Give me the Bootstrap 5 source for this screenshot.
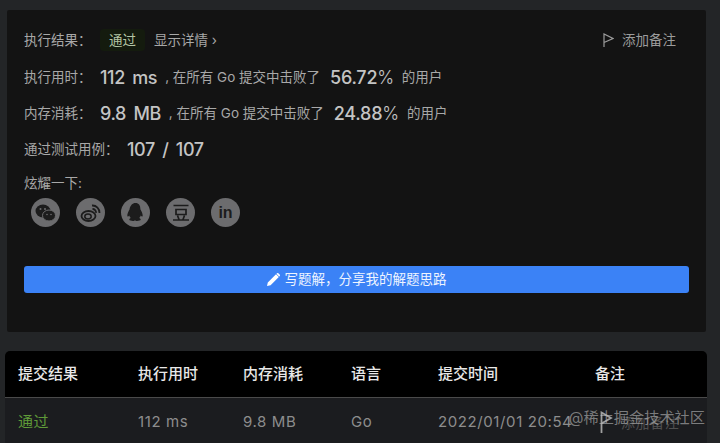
<!DOCTYPE html>
<html lang="zh">
<head>
    <meta charset="UTF-8">
    <title>提交结果</title>
    <link href="https://cdn.jsdelivr.net/npm/bootstrap@5.3.0/dist/css/bootstrap.min.css" rel="stylesheet">
    <style>
        html, body { height: 443px; overflow: hidden; }
        body {
            background: #232527;
            font-family: "Inter", "Noto Sans CJK SC", sans-serif;
            color: #a8a8a8;
            font-size: 13.5px;
        }
        .page-wrap { padding: 10px 14px 0 5px; position: relative; }
        .result-panel {
            background: #131313;
            margin-left: 2px;
            height: 322px;
            padding: 20px 17px 0;
            border-radius: 2px;
        }
        .info-row { display: flex; align-items: center; height: 22px; margin-top: 14px; }
        .info-top { height: 20px; margin-top: 0; margin-bottom: 16px; }
        .info-label { width: 76px; flex-shrink: 0; }
        .info-label-wide { width: 103px; flex-shrink: 0; }
        .big-val { font-size: 18px; font-weight: 500; color: #c4c4c4; white-space: pre; letter-spacing: -.4px; word-spacing: 3px; }
        .pct-val { margin-left: 10px; letter-spacing: -.25px; }
        .user-tail { margin-left: 8px; }
        .pct-sign { font-weight: 300; }
        .pass-tag { background: #141b0e; color: #b3c5a4; border-radius: 4px; padding: 1px 9px; }
        .detail-link { margin-left: 9px; }
        .flag-link { color: #9c9c9c; margin-right: 13px; }
        .share-title { margin-top: 13px; line-height: 20px; }
        .share-list { gap: 16px; margin: 5px 0 0 7px; }
        .share-dot { width: 29px; height: 29px; border-radius: 50%; background: #6c6c6e; }
        .in-mark { color: #1c1c1c; font-weight: 700; font-size: 16px; font-family: "Liberation Sans", sans-serif; }
        .write-btn {
            background: #3b82f6;
            color: #eef4ff;
            height: 27px;
            border-radius: 3px;
            margin-top: 39px;
            gap: 5px;
        }
        .submit-table { margin-top: 19px; width: 702px; border-radius: 5px; overflow: hidden; font-size: 15px; }
        .head-row { background: #000; color: #e8e8e8; height: 47px; border-bottom: 1px solid #4a4a4a; font-weight: 500; }
        .body-row { background: #1b1c1f; color: #8d8d8d; height: 48px; letter-spacing: .6px; }
        .cell-a { width: 133px; padding-left: 13px; flex-shrink: 0; }
        .cell-b { width: 105px; flex-shrink: 0; }
        .cell-c { width: 108px; flex-shrink: 0; }
        .cell-d { width: 87px; flex-shrink: 0; }
        .cell-e { width: 157px; white-space: nowrap; flex-shrink: 0; }
        .pass-text { color: #5f9a38; }
        .note-flag { margin-left: 5px; }
        .note-text { color: #4f4f4f; font-size: 14px; }
        .watermark {
            position: absolute;
            right: 15px;
            top: 407px;
            font-size: 15.2px;
            color: rgba(190, 190, 190, .6);
            white-space: nowrap;
        }
    </style>
</head>
<body>
<div class="page-wrap">
    <div class="result-panel">
        <div class="info-row info-top">
            <span class="info-label">执行结果：</span>
            <span class="pass-tag">通过</span>
            <span class="detail-link">显示详情 ›</span>
            <span class="ms-auto flag-link d-flex align-items-center gap-2">
                <svg width="11" height="14" viewBox="0 0 11 14" fill="none" stroke="currentColor" stroke-width="1.2"><path d="M1 14V1l9 4.500L1 9.500"/></svg>
                添加备注
            </span>
        </div>
        <div class="info-row">
            <span class="info-label">执行用时：</span>
            <span class="big-val">112 ms</span>
            <span class="ms-2">, 在所有 Go 提交中击败了</span>
            <span class="big-val pct-val">56.72<span class="pct-sign">%</span></span>
            <span class="user-tail">的用户</span>
        </div>
        <div class="info-row">
            <span class="info-label">内存消耗：</span>
            <span class="big-val">9.8 MB</span>
            <span class="ms-2">, 在所有 Go 提交中击败了</span>
            <span class="big-val pct-val">24.88<span class="pct-sign">%</span></span>
            <span class="user-tail">的用户</span>
        </div>
        <div class="info-row">
            <span class="info-label-wide">通过测试用例：</span>
            <span class="big-val">107 / 107</span>
        </div>
        <div class="share-title">炫耀一下:</div>
        <div class="d-flex share-list">
            <span class="share-dot d-flex align-items-center justify-content-center">
                <svg width="21" height="18" viewBox="0 0 21 18"><ellipse cx="8" cy="7" rx="7.500" ry="6.500" fill="#1c1c1c"/><ellipse cx="14" cy="11.500" rx="6.500" ry="5.500" fill="#1c1c1c" stroke="#6c6c6e" stroke-width="1"/><circle cx="5.500" cy="5" r="1" fill="#6c6c6e"/><circle cx="10" cy="5" r="1" fill="#6c6c6e"/><circle cx="12" cy="10.500" r=".8" fill="#6c6c6e"/><circle cx="16" cy="10.500" r=".8" fill="#6c6c6e"/></svg>
            </span>
            <span class="share-dot d-flex align-items-center justify-content-center">
                <svg width="21" height="18" viewBox="0 0 21 18" fill="none" stroke="#1c1c1c"><ellipse cx="8.500" cy="12" rx="7" ry="5" stroke-width="1.800"/><ellipse cx="8" cy="12.500" rx="3.200" ry="2.400" stroke-width="1.500"/><path d="M12 1.500a7 7 0 0 1 7.500 7.500M12.500 5a3.500 3.500 0 0 1 3.500 3.800" stroke-width="1.800"/></svg>
            </span>
            <span class="share-dot d-flex align-items-center justify-content-center">
                <svg width="17" height="19" viewBox="0 0 17 19" fill="#1c1c1c"><path d="M8.500 0c3.300 0 4.800 2.500 4.800 5.300 0 1 .4 1.700 1.100 3 1.100 2 1.700 4.700.9 5.200-.5.300-1-.3-1.600-1.100-.2 1-.8 2-1.600 2.700 1.100.4 1.600 1 1.600 1.500 0 1-2.100 1.400-3.600 1.400-1 0-1.900-.4-2.100-.8-.2.400-1.100.8-2.100.8-1.500 0-3.600-.4-3.600-1.400 0-.5.500-1.100 1.600-1.500-.8-.7-1.400-1.700-1.600-2.700-.6.800-1.100 1.400-1.600 1.100-.8-.5-.2-3.200.9-5.200.7-1.300 1.100-2 1.100-3C3.700 2.500 5.200 0 8.500 0z"/></svg>
            </span>
            <span class="share-dot d-flex align-items-center justify-content-center">
                <svg width="18" height="18" viewBox="0 0 18 18" fill="none" stroke="#1c1c1c" stroke-width="1.700"><path d="M1.500 1.500h15M4 5.500h10v5H4zM5.500 11.500l1.500 4M12.500 11.500l-1.500 4M1 16h16"/></svg>
            </span>
            <span class="share-dot d-flex align-items-center justify-content-center in-mark">in</span>
        </div>
        <div class="write-btn d-flex align-items-center justify-content-center">
            <svg width="13" height="13" viewBox="0 0 13 13" fill="#fff"><path d="M0 13l.8-3.600L9 1.200l2.800 2.800-8.200 8.200zM9.800.4a1.300 1.300 0 0 1 1.800 0l1 1a1.300 1.300 0 0 1 0 1.800l-.4.400L9.400.8z"/></svg>
            写题解，分享我的解题思路
        </div>
    </div>
    <div class="submit-table">
        <div class="head-row d-flex align-items-center">
            <div class="cell-a">提交结果</div>
            <div class="cell-b">执行用时</div>
            <div class="cell-c">内存消耗</div>
            <div class="cell-d">语言</div>
            <div class="cell-e">提交时间</div>
            <div>备注</div>
        </div>
        <div class="body-row d-flex align-items-center">
            <div class="cell-a pass-text">通过</div>
            <div class="cell-b">112 ms</div>
            <div class="cell-c">9.8 MB</div>
            <div class="cell-d">Go</div>
            <div class="cell-e">2022/01/01 20:54</div>
            <div class="d-flex align-items-center gap-2 note-flag">
                <svg width="13" height="22" viewBox="0 0 13 22" fill="none" stroke="#a0a0a0" stroke-width="1.800"><path d="M1.500 22V1.500L11 7 1.500 12.500"/></svg>
                <span class="note-text">添加备注</span>
            </div>
        </div>
    </div>
    <div class="watermark">@稀土掘金技术社区</div>
</div>
</body>
</html>
